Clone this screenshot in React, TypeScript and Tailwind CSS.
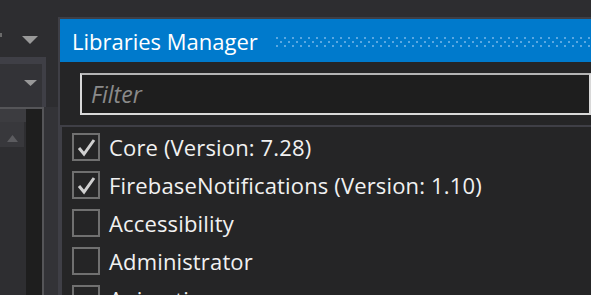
import React from "react";

const libs = [
  { name: "Core (Version: 7.28)", checked: true },
  { name: "FirebaseNotifications (Version: 1.10)", checked: true },
  { name: "Accessibility", checked: false },
  { name: "Administrator", checked: false },
  { name: "Animation", checked: false },
];

const font = { fontFamily: '"Open Sans", "Noto Sans", sans-serif' };

// dotted grip in the title bar, like the VS tool window header
const Grip = () => (
  <svg className="h-[10px] flex-1 self-start mt-[18px]" preserveAspectRatio="none">
    <defs>
      <pattern id="grip" width="8" height="8" patternUnits="userSpaceOnUse">
        <rect x="0" y="0" width="2" height="2" fill="#5aa8e2" />
        <rect x="4" y="4" width="2" height="2" fill="#5aa8e2" />
      </pattern>
    </defs>
    <rect width="100%" height="100%" fill="url(#grip)" />
  </svg>
);

const Checkbox = ({ checked }: { checked: boolean }) => (
  <div className="w-[28px] h-[28px] shrink-0 border-2 border-[#707070] bg-[#252526]">
    {checked && (
      <svg width="24" height="24" viewBox="0 0 24 24">
        <path d="M5 13 L10 19 L20 5" fill="none" stroke="#d0d0d0" strokeWidth="3" />
      </svg>
    )}
  </div>
);

const LeftPanel = () => (
  <div className="w-[58px] shrink-0 flex flex-col">
    <div className="h-[57px] flex items-start pt-[33px]">
      <div className="w-[2px] h-[4px] bg-[#6a6a6a]" />
      <svg className="ml-[20px] mt-[3px]" width="16" height="8" viewBox="0 0 16 8">
        <path d="M0 0 H16 L8 8 Z" fill="#999999" />
      </svg>
    </div>
    <div className="w-[46px] h-[50px] border-t-[7px] border-r-4 border-[#3f3f46] bg-[#333337] pt-[16px] pl-[24px]">
      <svg width="13" height="6" viewBox="0 0 13 6">
        <path d="M0 0 H13 L6.5 6 Z" fill="#999999" />
      </svg>
    </div>
    <div className="flex-1 flex">
      <div className="w-[44px] flex border-t-2 border-r-2 border-[#555558]">
        <div className="w-[26px] flex flex-col bg-[#2e2e31]">
          <div className="h-[13px] bg-[#3c3c40]" />
          <div className="w-[24px] h-[25px] bg-[#38383c] flex justify-center pt-[13px]">
            <svg width="11" height="7" viewBox="0 0 11 7">
              <path d="M0 7 H11 L5.5 0 Z" fill="#5c5c60" />
            </svg>
          </div>
        </div>
        <div className="w-[16px] bg-[#1e1e1e]" />
      </div>
      <div className="flex-1 bg-[#333337]" />
    </div>
  </div>
);

export default function App() {
  return (
    <div className="w-[591px] h-[295px] bg-[#2d2d30] flex overflow-hidden" style={font}>
      <LeftPanel />
      <div className="flex-1 min-w-0 pt-[17px] flex">
        <div className="flex-1 flex flex-col border-t-2 border-l-2 border-[#3f3f46] bg-[#252526]">
          <div className="h-[43px] shrink-0 bg-[#007acc] flex items-center pl-[12px]">
            <span className="w-[204px] shrink-0 text-[22px] text-white whitespace-nowrap leading-none">
              Libraries Manager
            </span>
            <Grip />
          </div>
          <div className="pt-[11px] pl-[20px] pb-[10px]">
            <div className="h-[42px] border-2 border-[#d8d8d8] border-t-[#b4b4b4] bg-[#1e1e1e] flex items-center pl-[9px]">
              <span className="text-[23px] italic text-[#8a8a8a] leading-none">Filter</span>
            </div>
          </div>
          <div className="flex-1 border-t-2 border-l-2 border-[#3f3f46] pt-px pl-[10px]">
            {libs.map((lib) => (
              <div key={lib.name} className="h-[38px] flex items-center gap-[9px]">
                <Checkbox checked={lib.checked} />
                <span className="text-[22px] tracking-[0.15px] text-[#f1f1f1] whitespace-nowrap leading-none">
                  {lib.name}
                </span>
              </div>
            ))}
          </div>
        </div>
      </div>
    </div>
  );
}
